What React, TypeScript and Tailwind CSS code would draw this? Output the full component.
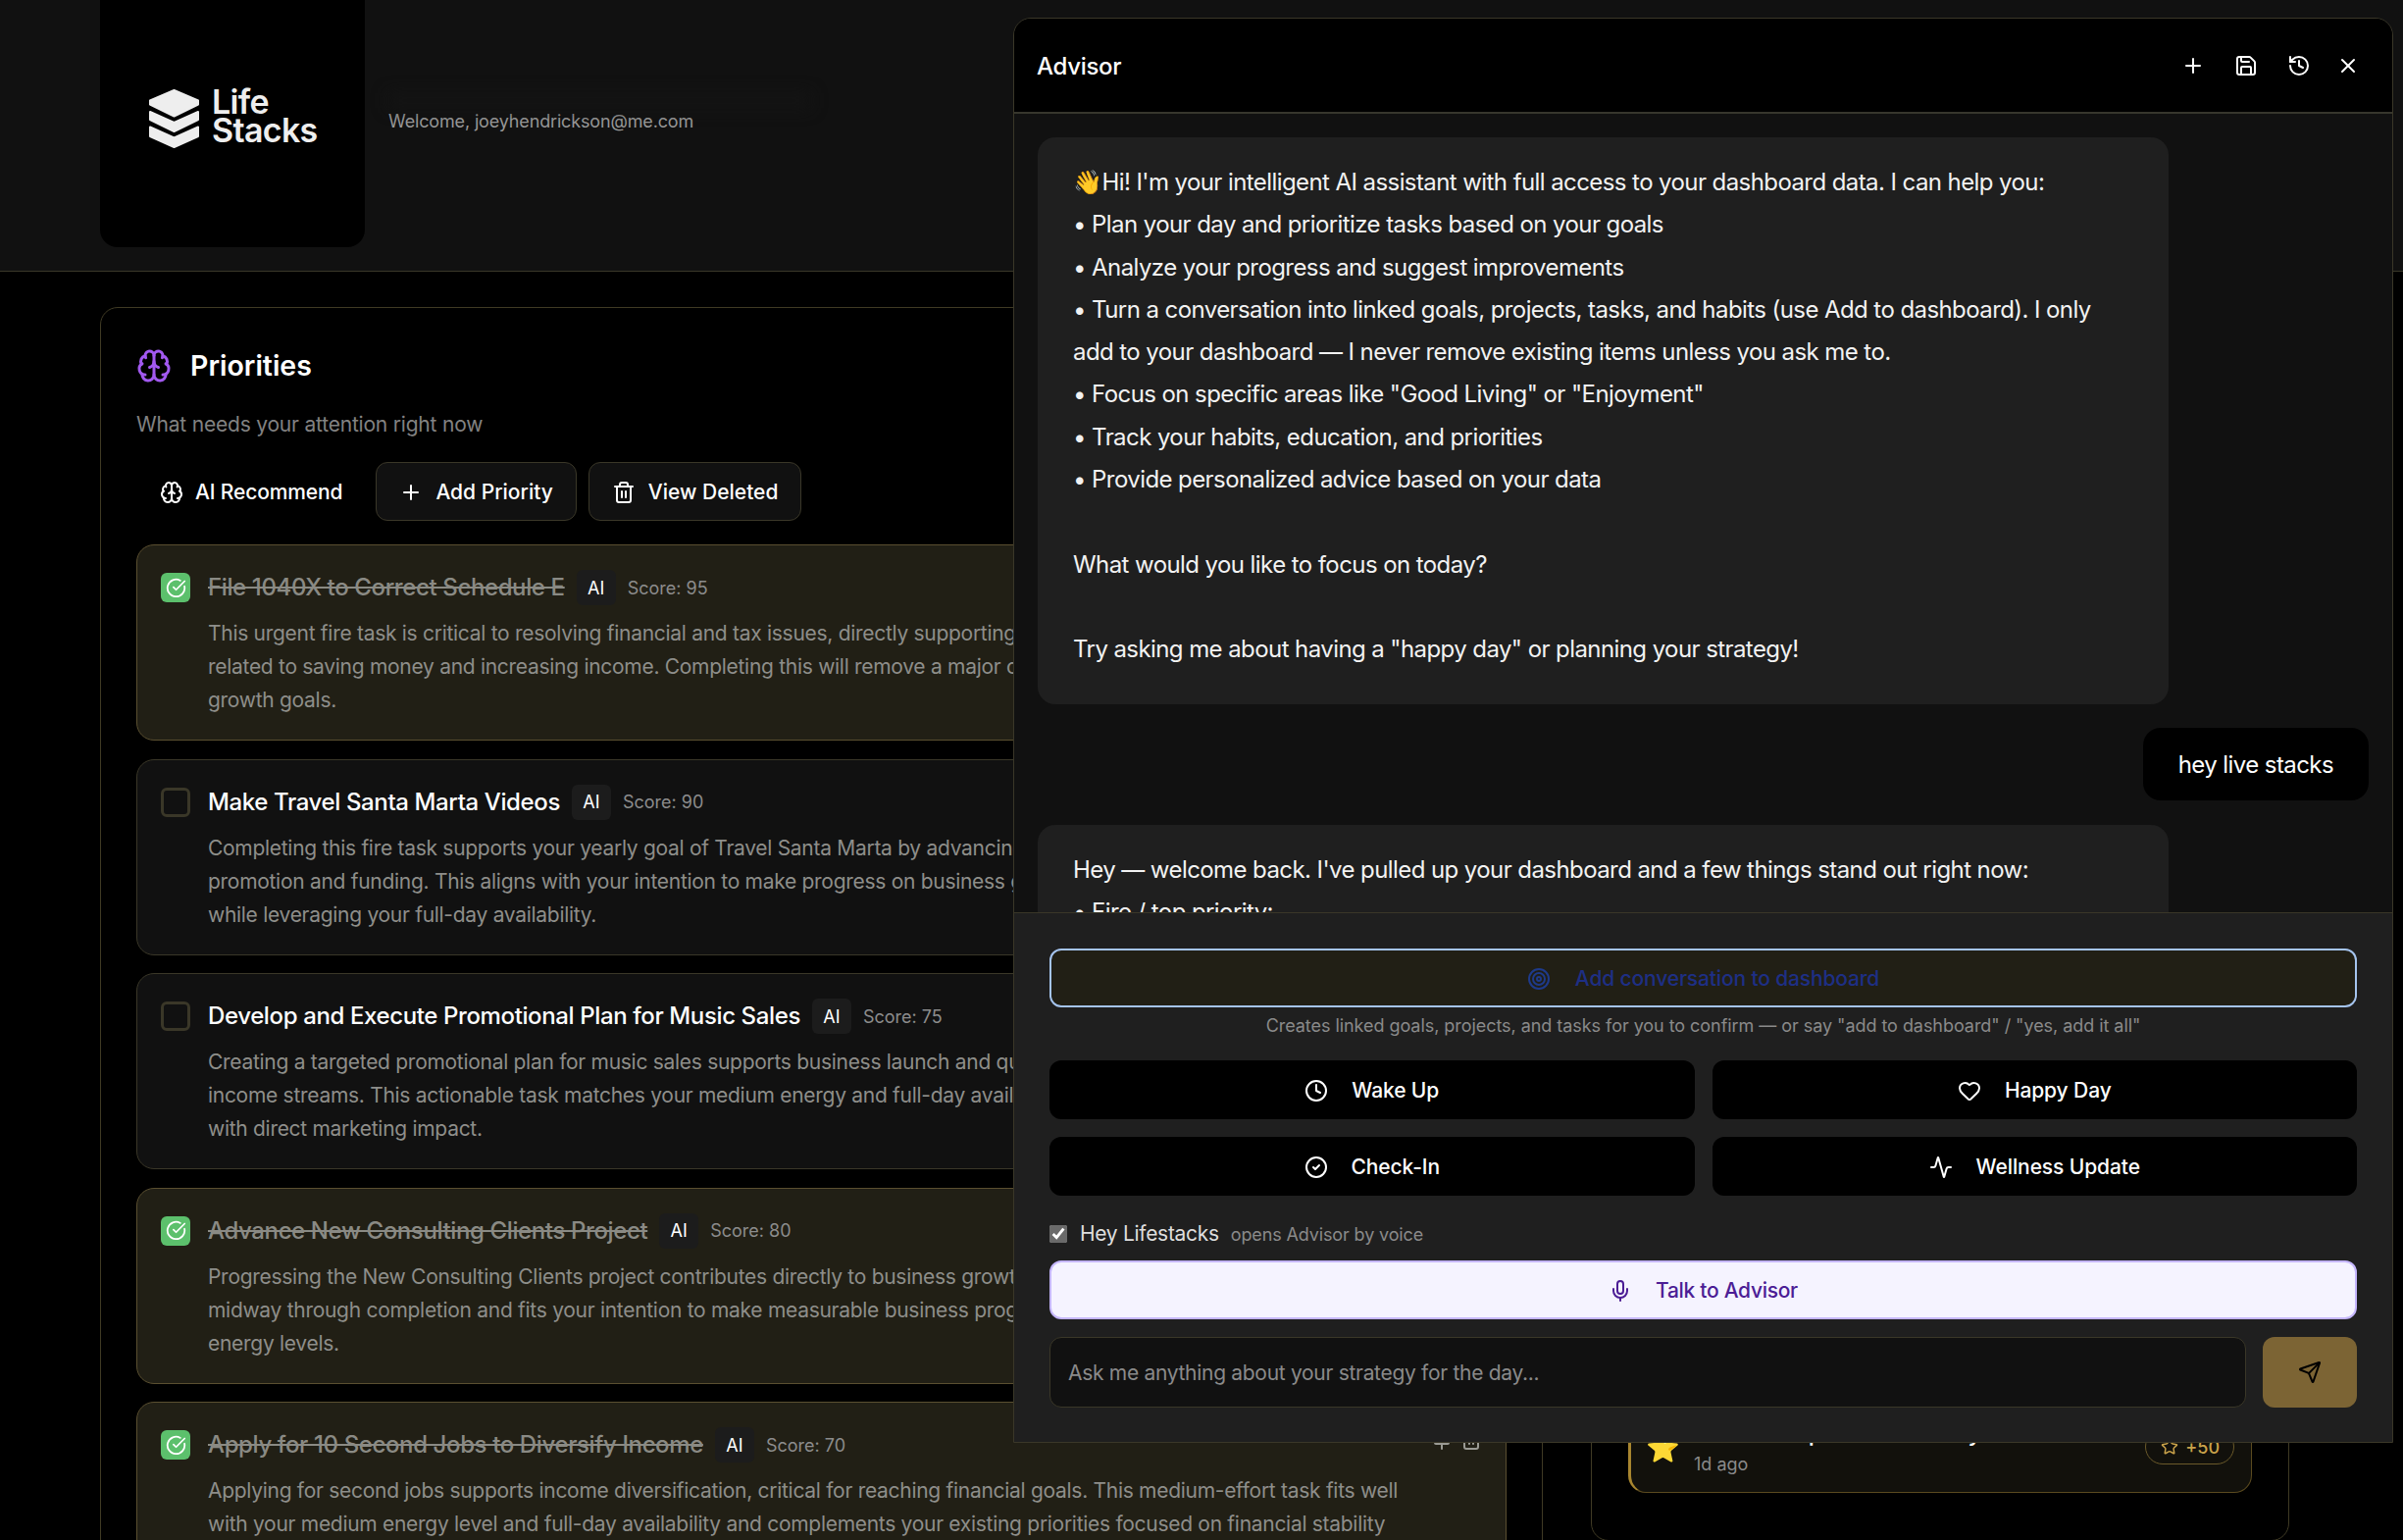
import React from "react";
import { Activity, Brain, CircleCheck, CircleCheckBig, Clock, Heart, History, Mic, Pin, Plus, Save, Send, Star, Target, Trash2, X } from "lucide-react";

const priorities = [
  { title: "File 1040X to Correct Schedule E", score: 95, done: true, lines: ["This urgent fire task is critical to resolving financial and tax issues, directly supporting goals", "related to saving money and increasing income. Completing this will remove a major obstacle to your", "growth goals."] },
  { title: "Make Travel Santa Marta Videos", score: 90, done: false, lines: ["Completing this fire task supports your yearly goal of Travel Santa Marta by advancing content", "promotion and funding. This aligns with your intention to make progress on business goals", "while leveraging your full-day availability."] },
  { title: "Develop and Execute Promotional Plan for Music Sales", score: 75, done: false, lines: ["Creating a targeted promotional plan for music sales supports business launch and quarterly", "income streams. This actionable task matches your medium energy and full-day availability", "with direct marketing impact."] },
  { title: "Advance New Consulting Clients Project", score: 80, done: true, lines: ["Progressing the New Consulting Clients project contributes directly to business growth and is", "midway through completion and fits your intention to make measurable business progress at your", "energy levels."] },
  { title: "Apply for 10 Second Jobs to Diversify Income", score: 70, done: true, lines: ["Applying for second jobs supports income diversification, critical for reaching financial goals. This medium-effort task fits well", "with your medium energy level and full-day availability and complements your existing priorities focused on financial stability"] },
];

function LogoMark() {
  return (
    <svg width="51" height="60" viewBox="0 0 51 60" fill="#eeeeee" stroke="#eeeeee" strokeWidth="2" strokeLinejoin="round">
      <path d="M25.5 1 L50 11.5 V15.5 L25.5 27.5 L1 15.5 V11.5 Z" />
      <path d="M1 23 L25.5 34 L50 23 V31 L25.5 43 L1 31 Z" />
      <path d="M1 38.5 L25.5 49.5 L50 38.5 V48 L25.5 59 L1 48 Z" />
    </svg>
  );
}

function PriorityCard({ p }: { p: (typeof priorities)[number] }) {
  return (
    <div className={`relative rounded-[18px] border px-6 pb-[23px] pt-[25px] ${p.done ? "border-[#5a4f30] bg-[#211f15]" : "border-[#3a3728] bg-[#111111]"}`}>
      <div className="flex items-start gap-[18px]">
        {p.done ? (
          <div className="mt-[3px] flex h-[30px] w-[30px] shrink-0 items-center justify-center rounded-[6px] bg-[#5cc06c]">
            <CircleCheckBig size={21} color="#ffffff" />
          </div>
        ) : (
          <div className="mt-[3px] h-[30px] w-[30px] shrink-0 rounded-[6px] border-[3px] border-[#3a3728]" />
        )}
        <div className="min-w-0">
          <div className="flex h-9 items-center gap-3 whitespace-nowrap">
            <span className={`text-2xl font-medium leading-9 tracking-[-0.38px] ${p.done ? "text-[#8a8a84] line-through" : "text-white"}`}>{p.title}</span>
            <span className="flex h-9 w-10 items-center justify-center rounded-[6px] bg-[#1c1c1c] text-[18px] text-white">AI</span>
            <span className="text-[18px] text-[#8c8c8c]">Score: {p.score}</span>
          </div>
          <div className="mt-3 text-[21px] leading-[34px] tracking-[-0.29px] text-[#8e8e8a]">
            {p.lines.map((l) => (
              <div key={l} className="whitespace-nowrap">{l}</div>
            ))}
          </div>
        </div>
      </div>
      <div className="absolute right-[23px] top-[25px] flex items-center gap-[6px] text-[#9a9a94]">
        <Pin size={24} />
        <Trash2 size={24} />
      </div>
    </div>
  );
}

function QuickButton({ icon, label }: { icon: React.ReactNode; label: string }) {
  return (
    <button className="flex h-[60px] items-center justify-center gap-6 rounded-xl bg-black pt-px text-[21px] font-medium tracking-[-0.1px] text-white">
      {icon}
      {label}
    </button>
  );
}

function Advisor() {
  const intro = [
    "• Plan your day and prioritize tasks based on your goals",
    "• Analyze your progress and suggest improvements",
    "• Turn a conversation into linked goals, projects, tasks, and habits (use Add to dashboard). I only add to your dashboard — I never remove existing items unless you ask me to.",
    '• Focus on specific areas like "Good Living" or "Enjoyment"',
    "• Track your habits, education, and priorities",
    "• Provide personalized advice based on your data",
  ];
  return (
    <div className="absolute left-[1033px] top-[18px] flex h-[1453px] w-[1407px] flex-col overflow-hidden rounded-t-[18px] border border-[#3a3728] bg-[#111111]">
      <div className="flex h-[97px] shrink-0 items-center justify-between border-b-2 border-[#37362d] bg-black pl-[23px] pr-[22px]">
        <span className="pt-[2px] text-2xl font-medium tracking-[-0.3px] text-white">Advisor</span>
        <div className="flex items-center text-white">
          <button className="flex w-[54px] justify-center"><Plus size={24} /></button>
          <button className="flex w-[54px] justify-center"><Save size={24} /></button>
          <button className="flex w-[54px] justify-center"><History size={24} /></button>
          <button className="flex w-[46px] justify-center"><X size={24} /></button>
        </div>
      </div>
      <div className="flex min-h-0 flex-1 flex-col gap-6 overflow-hidden p-6 text-2xl leading-[43.3px] tracking-[-0.58px] text-[#f2f2f2]">
        <div className="w-[1153px] shrink-0 rounded-[18px] bg-[#1f1f1f] px-9 pb-[34px] pt-6">
          <div>👋Hi! I'm your intelligent AI assistant with full access to your dashboard data. I can help you:</div>
          {intro.map((l) => (
            <div key={l}>{l}</div>
          ))}
          <div className="mt-[43.3px]">What would you like to focus on today?</div>
          <div className="mt-[43.3px]">Try asking me about having a "happy day" or planning your strategy!</div>
        </div>
        <div className="shrink-0 self-end rounded-[18px] bg-black px-9 pb-[15px] pt-[16px] text-white">hey live stacks</div>
        <div className="mt-px w-[1153px] shrink-0 rounded-[18px] bg-[#1f1f1f] px-9 pb-[35px] pt-6">
          <div>Hey — welcome back. I've pulled up your dashboard and a few things stand out right now:</div>
          <div>• Fire / top priority:</div>
        </div>
      </div>
      <div className="shrink-0 border-t border-[#3a3728] bg-[#1f1f1f] px-9 pb-[35px] pt-9">
        <button className="flex h-[60px] w-full items-center justify-center gap-[25px] rounded-xl border-2 border-[#a5c4ee] bg-[#211f15] pt-px text-[21px] font-medium tracking-[-0.15px] text-[#1e2f85]">
          <Target size={24} color="#1e3a8a" />
          Add conversation to dashboard
        </button>
        <p className="mt-[5px] text-center text-[18px] leading-[27px] tracking-[-0.05px] text-[#8a8a8a]">
          Creates linked goals, projects, and tasks for you to confirm — or say "add to dashboard" / "yes, add it all"
        </p>
        <div className="mt-[22px] grid grid-cols-2 gap-x-[18px] gap-y-[18px]">
          <QuickButton icon={<Clock size={24} />} label="Wake Up" />
          <QuickButton icon={<Heart size={24} />} label="Happy Day" />
          <QuickButton icon={<CircleCheck size={24} />} label="Check-In" />
          <QuickButton icon={<Activity size={24} />} label="Wellness Update" />
        </div>
        <label className="mt-[24px] flex h-[30px] items-center">
          <input type="checkbox" defaultChecked className="h-[18px] w-[18px] accent-[#6a6a6a]" />
          <span className="ml-[13px] text-[21px] tracking-[-0.3px] text-[#dedede]">Hey Lifestacks</span>
          <span className="ml-3 text-[18px] tracking-[-0.13px] text-[#8a8a8a]">opens Advisor by voice</span>
        </label>
        <button className="mt-[12px] flex h-[60px] w-full items-center justify-center gap-6 rounded-xl border-2 border-[#c4b5fd] bg-[#f5f3ff] pt-px text-[21px] font-medium tracking-[-0.3px] text-[#4c1d95]">
          <Mic size={24} color="#4c1d95" />
          Talk to Advisor
        </button>
        <div className="mt-[18px] flex gap-[17px]">
          <input
            placeholder="Ask me anything about your strategy for the day..."
            className="h-[72px] min-w-0 flex-1 rounded-xl border border-[#3a3728] bg-[#111111] px-[18px] text-[21px] tracking-[-0.3px] text-white outline-none placeholder:text-[#8a8a8a]"
          />
          <button className="flex h-[72px] w-[96px] items-center justify-center rounded-xl bg-[#7c6434]">
            <Send size={24} color="#000000" />
          </button>
        </div>
      </div>
    </div>
  );
}

export default function App() {
  return (
    <div className="relative h-[1570px] w-[2450px] overflow-hidden bg-black [font-family:Inter,sans-serif]">
      <header className="flex h-[277px] items-start border-b border-[#3a3728] bg-[#111111] pl-[102px]">
        <div className="flex h-[252px] w-[270px] items-start gap-[13px] rounded-b-[18px] bg-black pl-[50px] pt-[91px]">
          <LogoMark />
          <div className="-mt-[2px] text-[34px] font-semibold leading-[29px] tracking-[-0.02em] text-[#eeeeee]">
            Life
            <br />
            Stacks
          </div>
        </div>
        <div className="pl-[24px] pt-[95px]">
          <div className="h-[15px] w-[430px] bg-[#141414] blur-sm" />
          <div className="text-[18px] leading-[27px] tracking-[-0.15px] text-[#999999]">Welcome, joeyhendrickson@me.com</div>
        </div>
      </header>
      <main className="flex items-start gap-[49px] pl-[102px] pt-[36px]">
        <section className="h-[1500px] w-[1471px] shrink-0 rounded-[18px] border border-[#3f3a24] bg-black px-9 pt-[38px]">
          <div className="flex h-[42px] items-center gap-[19px]">
            <Brain size={36} color="#a259f0" />
            <h2 className="text-[28.5px] font-semibold text-white">Priorities</h2>
          </div>
          <p className="mt-[24px] text-[21px] leading-[30px] tracking-[-0.2px] text-[#828282]">What needs your attention right now</p>
          <div className="mt-[23px] flex items-center gap-3 text-[21px] font-medium text-white">
            <button className="flex h-[60px] items-center gap-3 pl-6 pr-[22px] pt-px">
              <Brain size={24} />
              <span className="tracking-[-0.13px]">AI Recommend</span>
            </button>
            <button className="flex h-[60px] items-center gap-[13px] rounded-xl border border-[#3a3728] bg-[#111111] px-[23px] pt-px">
              <Plus size={24} />
              Add Priority
            </button>
            <button className="flex h-[60px] items-center gap-[13px] rounded-xl border border-[#3a3728] bg-[#111111] px-[23px] pt-px">
              <Trash2 size={24} />
              View Deleted
            </button>
          </div>
          <div className="mt-[24px] flex flex-col gap-[18.5px]">
            {priorities.map((p) => (
              <PriorityCard key={p.title} p={p} />
            ))}
          </div>
        </section>
        <aside className="flex h-[1258px] w-[712px] shrink-0 flex-col justify-end rounded-[18px] border border-[#3f3a24] bg-black px-[37px] pb-[48px]">
          <div className="flex h-[90px] items-start justify-between rounded-[18px] border border-[#5a4a1f] border-l-[3px] border-l-[#a8862f] bg-[#12110c] pl-[15px] pr-[17px] pt-[10px]">
            <div className="flex items-start gap-[14px]">
              <span className="mt-[15px] text-[28px] leading-[36px]">⭐</span>
              <div>
                <div className="text-2xl font-medium leading-9 tracking-[-0.4px] text-white">Habit Completed: Sobriety</div>
                <div className="text-[18px] leading-[27px] text-[#8a8a8a]">1d ago</div>
              </div>
            </div>
            <div className="mt-[14px] flex h-9 items-center gap-[7px] rounded-full border border-[#6b5a2a] pl-[15px] pr-[14px] text-[18px] font-medium text-[#c9a24a]">
              <Star size={18} />
              +50
            </div>
          </div>
        </aside>
      </main>
      <Advisor />
    </div>
  );
}
